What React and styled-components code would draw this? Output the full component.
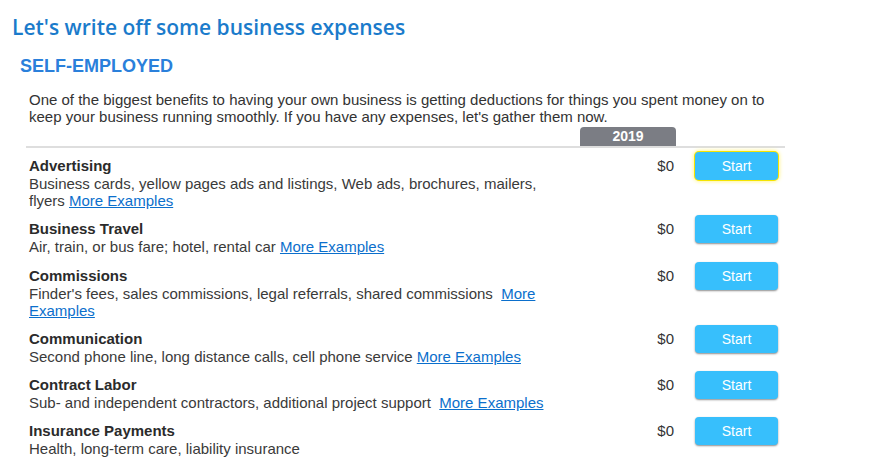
import React from 'react';
import styled, { createGlobalStyle } from 'styled-components';

const Global = createGlobalStyle`
	html, body {
		margin: 0;
		padding: 0;
		background: #fff;
	}
	body {
		font-family: 'Liberation Sans', Arial, sans-serif;
		color: #333;
	}
`;

const Page = styled.div`
	width: 873px;
	height: 461px;
	overflow: hidden;
	padding: 13px 0 0 12px;
	box-sizing: border-box;
`;

const Title = styled.h1`
	font-family: 'Open Sans', 'Lato', sans-serif;
	font-weight: 600;
	font-size: 21px;
	line-height: 28px;
	color: #1b7bcb;
	margin: 0;
`;

const Section = styled.h2`
	font-family: 'Liberation Sans', Arial, sans-serif;
	font-weight: 700;
	font-size: 18px;
	line-height: 20px;
	color: #2a80db;
	margin: 15px 0 0 8px;
`;

const Body = styled.div`
	margin: 15px 0 0 14px;
	width: 759px;
`;

const Intro = styled.p`
	margin: 0 0 0 3px;
	font-size: 15px;
	line-height: 17px;
	color: #333;
	width: 740px;
`;

const HeaderRow = styled.div`
	display: grid;
	grid-template-columns: 554px 96px 1fr;
	border-bottom: 2px solid #dedede;
	margin-top: 2px;
`;

const YearTab = styled.div`
	grid-column: 2;
	background: #7b7d84;
	color: #fff;
	font-weight: 700;
	font-size: 14px;
	line-height: 19px;
	text-align: center;
	border-radius: 4px 4px 0 0;
`;

const List = styled.div`
	display: flex;
	flex-direction: column;
	padding-top: 9px;
	gap: 11.3px;
`;

const Row = styled.div`
	display: grid;
	grid-template-columns: 535px 96px 83px;
	column-gap: 19px;
	align-items: start;
`;

const Info = styled.div`
	padding-left: 3px;
	width: 530px;
`;

const Name = styled.div`
	font-weight: 700;
	font-size: 15px;
	line-height: 18px;
	color: #2b2b2b;
`;

const Desc = styled.div`
	font-size: 15px;
	line-height: 17px;
	color: #3a3a3a;
`;

const Link = styled.a`
	color: #0b6fcc;
	text-decoration: underline;
	cursor: pointer;
`;

const Amount = styled.div`
	text-align: right;
	padding-right: 2px;
	font-size: 15px;
	line-height: 18px;
	color: #333;
`;

const StartButton = styled.button`
	width: 83px;
	height: 28px;
	margin-top: -5px;
	border: none;
	border-radius: 4px;
	background: #37bffc;
	color: #fff;
	font-family: 'Liberation Sans', Arial, sans-serif;
	font-size: 14px;
	cursor: pointer;
	box-shadow: ${(p) =>
		p.$focused
			? '0 0 0 1px #f5e400, 0 0 4px 1px #fff06a'
			: '0 1px 2px rgba(0, 0, 0, 0.45)'};
`;

const expenses = [
	{
		name: 'Advertising',
		desc: 'Business cards, yellow pages ads and listings, Web ads, brochures, mailers, flyers',
		more: true,
	},
	{ name: 'Business Travel', desc: 'Air, train, or bus fare; hotel, rental car', more: true },
	{
		name: 'Commissions',
		desc: "Finder's fees, sales commissions, legal referrals, shared commissions\u00a0",
		more: true,
	},
	{ name: 'Communication', desc: 'Second phone line, long distance calls, cell phone service', more: true },
	{ name: 'Contract Labor', desc: 'Sub- and independent contractors, additional project support\u00a0', more: true },
	{ name: 'Insurance Payments', desc: 'Health, long-term care, liability insurance', more: false },
];

export default function App() {
	return (
		<>
			<Global />
			<Page>
				<Title>Let's write off some business expenses</Title>
				<Section>SELF-EMPLOYED</Section>
				<Body>
					<Intro>
						One of the biggest benefits to having your own business is getting deductions for things you spent
						money on to keep your business running smoothly. If you have any expenses, let's gather them now.
					</Intro>
					<HeaderRow>
						<YearTab>2019</YearTab>
					</HeaderRow>
					<List>
						{expenses.map((e, i) => (
							<Row key={e.name}>
								<Info>
									<Name>{e.name}</Name>
									<Desc>
										{e.desc}
										{e.more && (
											<>
												{' '}
												<Link>More Examples</Link>
											</>
										)}
									</Desc>
								</Info>
								<Amount>$0</Amount>
								<StartButton $focused={i === 0}>Start</StartButton>
							</Row>
						))}
					</List>
				</Body>
			</Page>
		</>
	);
}
